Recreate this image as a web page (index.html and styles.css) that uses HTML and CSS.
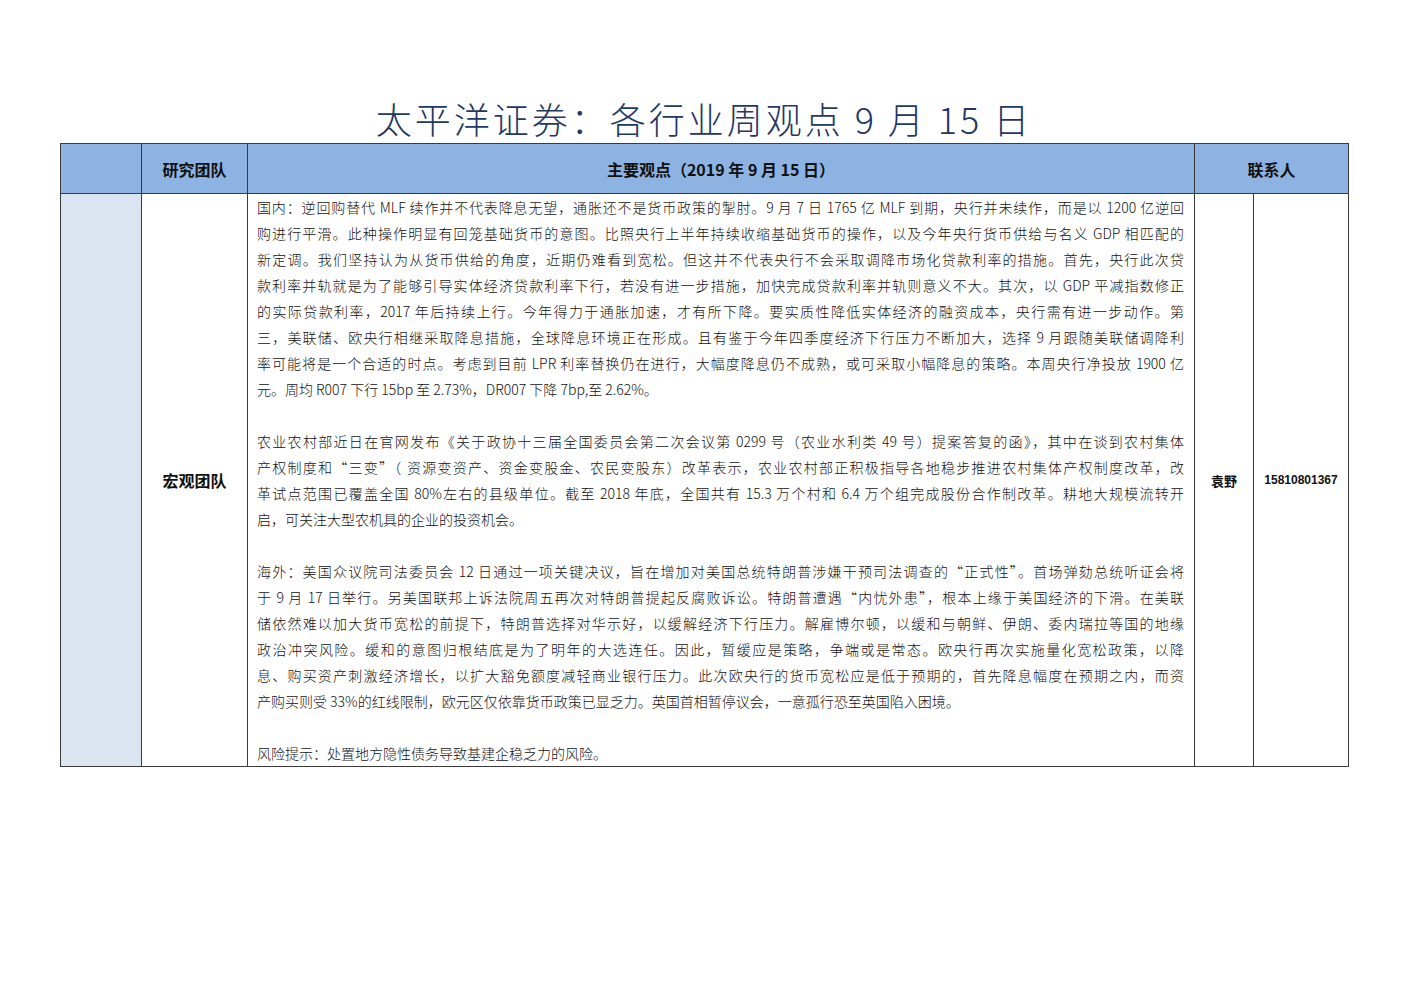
FILE: index.html
```html
<!DOCTYPE html>
<html lang="zh-CN">
<head>
<meta charset="utf-8">
<title>太平洋证券：各行业周观点9月15日</title>
<link rel="stylesheet" href="styles.css">
</head>
<body>
<div class="page">
  <h1 class="title">太平洋证券：各行业周观点 9 月 15 日</h1>
  <table class="grid">
    <colgroup>
      <col class="c1"><col class="c2"><col class="c3"><col class="c4"><col class="c5">
    </colgroup>
    <thead>
      <tr class="head">
        <th class="side"></th>
        <th>研究团队</th>
        <th>主要观点（2019 年 9 月 15 日）</th>
        <th colspan="2">联系人</th>
      </tr>
    </thead>
    <tbody>
      <tr class="row">
        <td class="side"></td>
        <td class="team">宏观团队</td>
        <td class="body">
          <div class="ln j">国内：逆回购替代 MLF 续作并不代表降息无望，通胀还不是货币政策的掣肘。9 月 7 日 1765 亿 MLF 到期，央行并未续作，而是以 1200 亿逆回</div>
          <div class="ln j">购进行平滑。此种操作明显有回笼基础货币的意图。比照央行上半年持续收缩基础货币的操作，以及今年央行货币供给与名义 GDP 相匹配的</div>
          <div class="ln j">新定调。我们坚持认为从货币供给的角度，近期仍难看到宽松。但这并不代表央行不会采取调降市场化贷款利率的措施。首先，央行此次贷</div>
          <div class="ln j">款利率并轨就是为了能够引导实体经济贷款利率下行，若没有进一步措施，加快完成贷款利率并轨则意义不大。其次，以 GDP 平减指数修正</div>
          <div class="ln j">的实际贷款利率，2017 年后持续上行。今年得力于通胀加速，才有所下降。要实质性降低实体经济的融资成本，央行需有进一步动作。第</div>
          <div class="ln j">三，美联储、欧央行相继采取降息措施，全球降息环境正在形成。且有鉴于今年四季度经济下行压力不断加大，选择 9 月跟随美联储调降利</div>
          <div class="ln j">率可能将是一个合适的时点。考虑到目前 LPR 利率替换仍在进行，大幅度降息仍不成熟，或可采取小幅降息的策略。本周央行净投放 1900 亿</div>
          <div class="ln">元。周均 R007 下行 15bp 至 2.73%，DR007 下降 7bp,至 2.62%。</div>
          <div class="ln blank"></div>
          <div class="ln j">农业农村部近日在官网发布《关于政协十三届全国委员会第二次会议第 0299 号（农业水利类 49 号）提案答复的函》，其中在谈到农村集体</div>
          <div class="ln j">产权制度和“三变”（ 资源变资产、资金变股金、农民变股东）改革表示，农业农村部正积极指导各地稳步推进农村集体产权制度改革，改</div>
          <div class="ln j">革试点范围已覆盖全国 80%左右的县级单位。截至 2018 年底，全国共有 15.3 万个村和 6.4 万个组完成股份合作制改革。耕地大规模流转开</div>
          <div class="ln">启，可关注大型农机具的企业的投资机会。</div>
          <div class="ln blank"></div>
          <div class="ln j">海外：美国众议院司法委员会 12 日通过一项关键决议，旨在增加对美国总统特朗普涉嫌干预司法调查的“正式性”。首场弹劾总统听证会将</div>
          <div class="ln j">于 9 月 17 日举行。另美国联邦上诉法院周五再次对特朗普提起反腐败诉讼。特朗普遭遇“内忧外患”，根本上缘于美国经济的下滑。在美联</div>
          <div class="ln j">储依然难以加大货币宽松的前提下，特朗普选择对华示好，以缓解经济下行压力。解雇博尔顿，以缓和与朝鲜、伊朗、委内瑞拉等国的地缘</div>
          <div class="ln j">政治冲突风险。缓和的意图归根结底是为了明年的大选连任。因此，暂缓应是策略，争端或是常态。欧央行再次实施量化宽松政策，以降</div>
          <div class="ln j">息、购买资产刺激经济增长，以扩大豁免额度减轻商业银行压力。此次欧央行的货币宽松应是低于预期的，首先降息幅度在预期之内，而资</div>
          <div class="ln">产购买则受 33%的红线限制，欧元区仅依靠货币政策已显乏力。英国首相暂停议会，一意孤行恐至英国陷入困境。</div>
          <div class="ln blank"></div>
          <div class="ln">风险提示：处置地方隐性债务导致基建企稳乏力的风险。</div>
        </td>
        <td class="name">袁野</td>
        <td class="phone">15810801367</td>
      </tr>
    </tbody>
  </table>
</div>
</body>
</html>
```

FILE: styles.css
```css
html, body {
  margin: 0;
  padding: 0;
  background: #ffffff;
}

.page {
  padding: 95px 0 0 60px;
  width: 1288px;
  font-family: "Noto Sans CJK SC", "Liberation Sans", sans-serif;
  color: #1a1a1a;
}

.title {
  margin: 0 0 2px 0;
  height: 46px;
  line-height: 46px;
  text-align: center;
  font-size: 36px;
  font-weight: 300;
  letter-spacing: 3px;
  color: #1f3864;
  white-space: nowrap;
}

.grid {
  border-collapse: collapse;
  table-layout: fixed;
  width: 1288px;
  border: 1.5px solid #2a2a2a;
}

.c1 { width: 81px; }
.c2 { width: 106px; }
.c3 { width: 947px; }
.c4 { width: 59px; }
.c5 { width: 95px; }

.grid th,
.grid td {
  border: 1.5px solid #3a3a3a;
  padding: 0;
}

.head th {
  height: 49px;
  background: #8db3e2;
  font-size: 16px;
  font-weight: 700;
  color: #111111;
  text-align: center;
  vertical-align: middle;
}

.side {
  background: #dbe5f1;
}

.head th.side {
  background: #8db3e2;
}

.row td {
  vertical-align: middle;
}

.team {
  text-align: center;
  font-size: 16px;
  font-weight: 700;
  color: #111111;
}

.body {
  padding: 0 10px 0 9px !important;
  font-size: 14px;
  font-weight: 300;
  color: #111111;
}

.ln {
  height: 26px;
  line-height: 26px;
  white-space: nowrap;
  overflow: hidden;
}

.ln.j {
  text-align: justify;
  text-align-last: justify;
}

.name {
  text-align: center;
  font-size: 13px;
  font-weight: 700;
  color: #111111;
}

.phone {
  text-align: center;
  font-family: "Liberation Sans", sans-serif;
  font-size: 12px;
  font-weight: 700;
  color: #111111;
}
```
